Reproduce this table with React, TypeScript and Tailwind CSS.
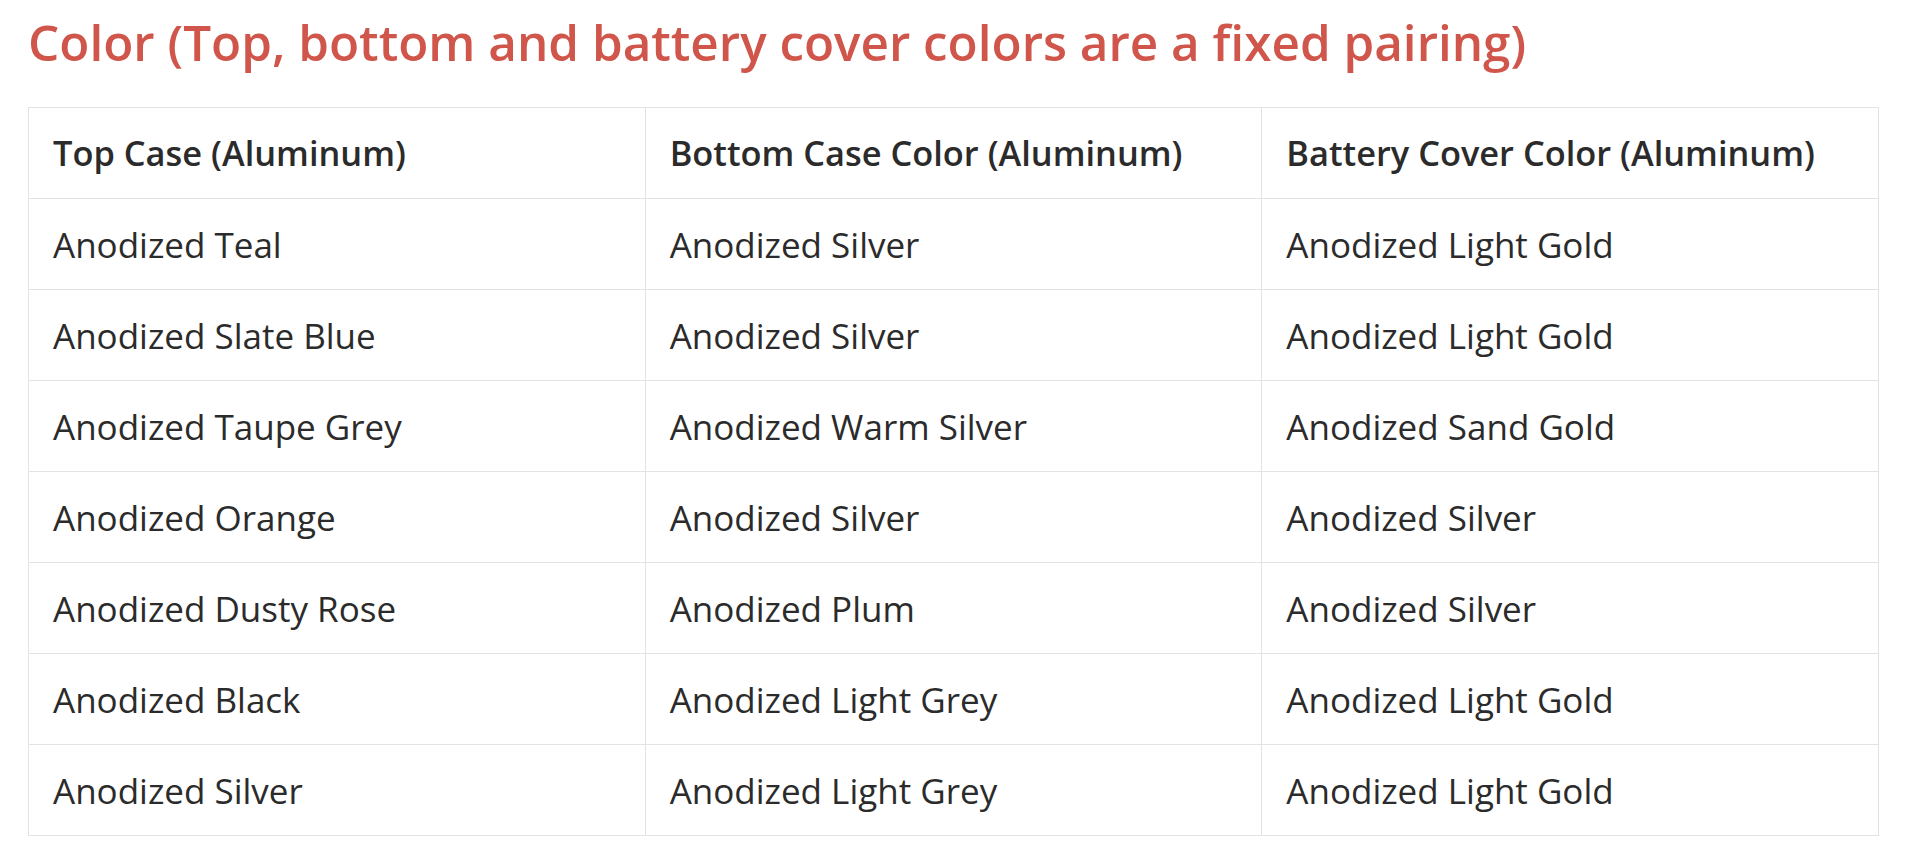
const rows: [string, string, string][] = [
  ["Anodized Teal", "Anodized Silver", "Anodized Light Gold"],
  ["Anodized Slate Blue", "Anodized Silver", "Anodized Light Gold"],
  ["Anodized Taupe Grey", "Anodized Warm Silver", "Anodized Sand Gold"],
  ["Anodized Orange", "Anodized Silver", "Anodized Silver"],
  ["Anodized Dusty Rose", "Anodized Plum", "Anodized Silver"],
  ["Anodized Black", "Anodized Light Grey", "Anodized Light Gold"],
  ["Anodized Silver", "Anodized Light Grey", "Anodized Light Gold"],
]

export default function App() {
  return (
    <div className="min-h-screen bg-white px-[28px] pt-[12px] font-['Open_Sans',sans-serif] text-[#2b2b2b]">
      <h2 className="text-[49.4px] leading-[60px] font-semibold text-[#d0564b]">
        Color (Top, bottom and battery cover colors are a fixed pairing)
      </h2>

      <table className="mt-[35px] w-[1851px] table-fixed border-collapse border border-[#e3e3e3]">
        <thead>
          <tr>
            <th className="h-[91px] border border-[#e3e3e3] px-[24px] text-left text-[34.4px] font-semibold">Top Case (Aluminum)</th>
            <th className="h-[91px] border border-[#e3e3e3] px-[24px] text-left text-[34.4px] font-semibold">Bottom Case Color (Aluminum)</th>
            <th className="h-[91px] border border-[#e3e3e3] px-[24px] text-left text-[34.4px] font-semibold">Battery Cover Color (Aluminum)</th>
          </tr>
        </thead>
        <tbody>
          {rows.map((row, i) => (
            <tr key={i}>
              {row.map((cell, j) => (
                <td key={j} className="h-[91px] border border-[#e3e3e3] px-[24px] pt-[2px] text-[35px]">
                  {cell}
                </td>
              ))}
            </tr>
          ))}
        </tbody>
      </table>
    </div>
  )
}
